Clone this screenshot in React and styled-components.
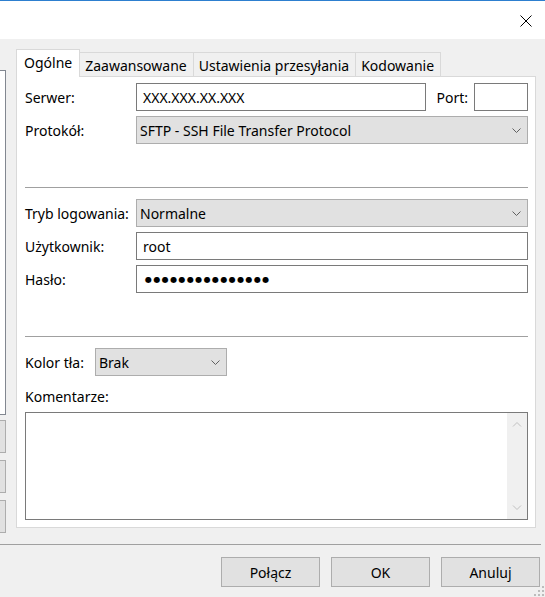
import React from "react";
import styled, { createGlobalStyle } from "styled-components";

const GlobalStyle = createGlobalStyle`
  html, body {
    margin: 0;
    padding: 0;
    background: #f0f0f0;
  }
  body {
    font-family: "Segoe UI", "Noto Sans", sans-serif;
    font-size: 14px;
    color: #000;
  }
  * { box-sizing: border-box; }
`;

const Window = styled.div`
  position: relative;
  width: 545px;
  height: 597px;
  display: flex;
  flex-direction: column;
  background: #f0f0f0;
  overflow: hidden;
`;

const TitleBar = styled.div`
  height: 39px;
  flex-shrink: 0;
  background: #fff;
  border-top: 1px solid #2d7fcf;
  display: flex;
  justify-content: flex-end;
  align-items: center;
  padding: 1px 13px 0 0;
`;

const CloseButton = styled.div`
  width: 12px;
  height: 12px;
  display: flex;
`;

const Main = styled.div`
  height: 494px;
  flex-shrink: 0;
  display: flex;
  gap: 10px;
  padding-top: 10px;
`;

const Sidebar = styled.div`
  width: 6px;
  display: flex;
  flex-direction: column;
  padding-top: 21px;
`;

const ListBox = styled.div`
  height: 345px;
  background: #fff;
  border: 1px solid #828790;
  border-left: none;
`;

const SideButton = styled.div`
  height: 33px;
  margin-top: ${(p) => p.$gap}px;
  background: #e1e1e1;
  border: 1px solid #adadad;
  border-left: none;
`;

const TabArea = styled.div`
  width: 520px;
  display: flex;
  flex-direction: column;
`;

const TabStrip = styled.div`
  height: 27px;
  display: flex;
  align-items: flex-end;
`;

const Tab = styled.div`
  position: relative;
  height: ${(p) => (p.$active ? 28 : 24)}px;
  margin-bottom: ${(p) => (p.$active ? -1 : 0)}px;
  margin-left: ${(p) => (p.$first ? 0 : -1)}px;
  z-index: ${(p) => (p.$active ? 2 : 1)};
  padding: ${(p) => (p.$active ? "0 7px 2px 7px" : "1px 6px 0 5px")};
  background: ${(p) => (p.$active ? "#fff" : "#f0f0f0")};
  border: 1px solid #d9d9d9;
  border-bottom: none;
  display: flex;
  align-items: center;
  white-space: nowrap;
`;

const Panel = styled.div`
  height: 452px;
  background: #fff;
  border: 1px solid #d9d9d9;
  padding: 6px 7px 0 8px;
  display: flex;
  flex-direction: column;
`;

const Row = styled.div`
  height: 28px;
  display: flex;
  align-items: center;
  margin-top: ${(p) => p.$top || 0}px;
  flex-shrink: 0;
`;

const Label = styled.div`
  width: ${(p) => p.$width || 111}px;
  flex-shrink: 0;
  white-space: nowrap;
`;

const InlineLabel = styled.div`
  margin: 0 6px 0 10px;
  white-space: nowrap;
`;

const TextInput = styled.div`
  flex: ${(p) => (p.$width ? "none" : 1)};
  width: ${(p) => (p.$width ? `${p.$width}px` : "auto")};
  height: 28px;
  border: 1px solid #7a7a7a;
  background: #fff;
  padding: 0 6px;
  display: flex;
  align-items: center;
  white-space: nowrap;
`;

const Select = styled.div`
  flex: ${(p) => (p.$width ? "none" : 1)};
  width: ${(p) => (p.$width ? `${p.$width}px` : "auto")};
  height: 28px;
  border: 1px solid #adadad;
  background: #e1e1e1;
  padding: 0 6px 0 3px;
  display: flex;
  align-items: center;
  justify-content: space-between;
  white-space: nowrap;
`;

const Dots = styled.span`
  font-family: "DejaVu Sans", sans-serif;
  font-size: 8px;
  letter-spacing: 1.4px;
  padding-left: 2px;
`;

const Separator = styled.div`
  height: 1px;
  flex-shrink: 0;
  background: #a0a0a0;
  margin: ${(p) => p.$margin};
`;

const CommentLabel = styled.div`
  height: 20px;
  line-height: 20px;
  margin: 11px 0 5px;
`;

const TextArea = styled.div`
  height: 108px;
  border: 1px solid #7a7a7a;
  background: #fff;
  display: flex;
  justify-content: flex-end;
`;

const ScrollBar = styled.div`
  width: 20px;
  background: #f0f0f0;
  display: flex;
  flex-direction: column;
  justify-content: space-between;
  align-items: center;
  padding: 9px 0 9px;
`;

const Footer = styled.div`
  height: 64px;
  flex-shrink: 0;
  padding-top: 11px;
`;

const ButtonRow = styled.div`
  display: flex;
  justify-content: flex-end;
  gap: 11px;
  padding: 12px 5px 0 0;
`;

const Button = styled.div`
  width: 99px;
  height: 30px;
  background: #e1e1e1;
  border: 1px solid #adadad;
  display: flex;
  align-items: center;
  justify-content: center;
`;

const Grip = styled.svg`
  position: absolute;
  right: 0;
  bottom: 0;
`;

const Chevron = ({ up, color = "#606060", w = 9 }) => (
  <svg width={w} height="5" viewBox="0 0 9 5">
    <path
      d={up ? "M0.5 4.5 L4.5 0.5 L8.5 4.5" : "M0.5 0.5 L4.5 4.5 L8.5 0.5"}
      fill="none"
      stroke={color}
      strokeWidth="1"
    />
  </svg>
);

export default function App() {
  return (
    <>
      <GlobalStyle />
      <Window>
        <TitleBar>
          <CloseButton>
            <svg width="12" height="12" viewBox="0 0 12 12">
              <path d="M0.5 0.5 L11.5 11.5 M11.5 0.5 L0.5 11.5" stroke="#000" strokeWidth="1" />
            </svg>
          </CloseButton>
        </TitleBar>

        <Main>
          <Sidebar>
            <ListBox />
            <SideButton $gap={5} />
            <SideButton $gap={7} />
            <SideButton $gap={7} />
          </Sidebar>

          <TabArea>
            <TabStrip>
              <Tab $active $first>Ogólne</Tab>
              <Tab>Zaawansowane</Tab>
              <Tab>Ustawienia przesyłania</Tab>
              <Tab>Kodowanie</Tab>
            </TabStrip>

            <Panel>
              <Row>
                <Label>Serwer:</Label>
                <TextInput>XXX.XXX.XX.XXX</TextInput>
                <InlineLabel>Port:</InlineLabel>
                <TextInput $width={54} />
              </Row>
              <Row $top={5}>
                <Label>Protokół:</Label>
                <Select>
                  SFTP - SSH File Transfer Protocol
                  <Chevron />
                </Select>
              </Row>

              <Separator $margin="43px 0 11px" />

              <Row>
                <Label>Tryb logowania:</Label>
                <Select>
                  Normalne
                  <Chevron />
                </Select>
              </Row>
              <Row $top={5}>
                <Label>Użytkownik:</Label>
                <TextInput>root</TextInput>
              </Row>
              <Row $top={5}>
                <Label>Hasło:</Label>
                <TextInput>
                  <Dots>●●●●●●●●●●●●●●●</Dots>
                </TextInput>
              </Row>

              <Separator $margin="43px 0 11px" />

              <Row>
                <Label $width={70}>Kolor tła:</Label>
                <Select $width={132}>
                  Brak
                  <Chevron />
                </Select>
              </Row>

              <CommentLabel>Komentarze:</CommentLabel>
              <TextArea>
                <ScrollBar>
                  <Chevron up color="#c0c0c0" w={10} />
                  <Chevron color="#c0c0c0" w={10} />
                </ScrollBar>
              </TextArea>
            </Panel>
          </TabArea>
        </Main>

        <Footer>
          <Separator $margin="0 4px 0 0" />
          <ButtonRow>
            <Button>Połącz</Button>
            <Button>OK</Button>
            <Button>Anuluj</Button>
          </ButtonRow>
        </Footer>

        <Grip width="11" height="11" viewBox="0 0 11 11">
          {[
            [8, 0], [8, 4], [4, 4], [8, 8], [4, 8], [0, 8],
          ].map(([x, y]) => (
            <rect key={`${x}-${y}`} x={x} y={y} width="2" height="2" fill="#bcbcbc" />
          ))}
        </Grip>
      </Window>
    </>
  );
}
